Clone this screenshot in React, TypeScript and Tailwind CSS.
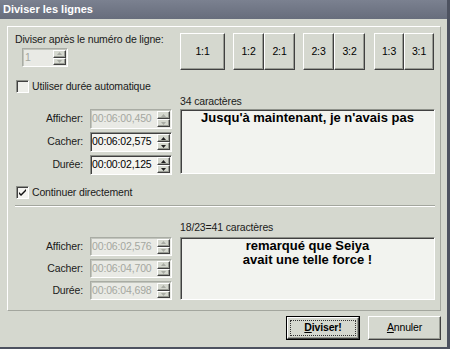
const raised =
  "border border-t-white border-l-white border-r-[#404040] border-b-[#404040] shadow-[inset_-1px_-1px_0_#9a9d95]";
const sunken =
  "border border-t-[#8e918a] border-l-[#8e918a] border-r-white border-b-white shadow-[inset_1px_1px_0_#404040]";
const sunkenOff =
  "border border-t-[#a9aca4] border-l-[#a9aca4] border-r-white border-b-white shadow-[inset_1px_1px_0_#c2c5bd]";
const small = "text-[10.5px] tracking-[-0.15px]";

const Arrow = ({ up, disabled }: { up: boolean; disabled?: boolean }) => (
  <svg width="5" height="3" viewBox="0 0 5 3">
    <path d={up ? "M2.5 0 L5 3 L0 3 Z" : "M0 0 L5 0 L2.5 3 Z"} fill={disabled ? "#a8aba3" : "#202020"} />
  </svg>
);

const Spinner = ({ disabled }: { disabled?: boolean }) => (
  <div className="flex flex-col w-[13px] h-full">
    <div className={`flex-1 flex items-center justify-center bg-[#d5d8cf] ${raised}`}>
      <Arrow up disabled={disabled} />
    </div>
    <div className={`flex-1 flex items-center justify-center bg-[#d5d8cf] ${raised}`}>
      <Arrow up={false} disabled={disabled} />
    </div>
  </div>
);

const TimeRow = ({ label, value, disabled, h }: { label: string; value: string; disabled?: boolean; h: string }) => (
  <div className={`flex items-center ${h}`}>
    <span className={`w-[68px] text-right ${small} text-[#1a1a1a]`}>{label}</span>
    <div
      className={`ml-[7px] w-[82px] h-full flex items-stretch ${disabled ? sunkenOff + " bg-[#e9eae5]" : sunken + " bg-[#f4f4f0]"}`}
    >
      <span className={`flex-1 pl-[1px] flex items-center ${small} ${disabled ? "text-[#a4a7a0]" : "text-black"}`}>
        {value}
      </span>
      <div className="py-[1px] pr-[1px]">
        <Spinner disabled={disabled} />
      </div>
    </div>
  </div>
);

const Check = ({ checked, label }: { checked?: boolean; label: string }) => (
  <div className="flex items-center h-[13px] ml-[1px]">
    <div className={`w-[13px] h-[13px] flex items-center justify-center ${checked ? "bg-[#f4f4f0]" : "bg-[#eeefea]"} ${sunken}`}>
      {checked && (
        <svg width="7" height="7" viewBox="0 0 7 7">
          <path d="M0 3 L0 5 L2 7 L7 2 L7 0 L2 5 Z" fill="#111" />
        </svg>
      )}
    </div>
    <span className={`ml-[3px] ${small} text-[#1a1a1a]`}>{label}</span>
  </div>
);

const RatioBtn = ({ t, w }: { t: string; w: string }) => (
  <div className={`${w} h-[37px] flex items-center justify-center ${small} text-black bg-[#d5d8cf] ${raised}`}>{t}</div>
);

export default function App() {
  return (
    <div className="w-[450px] h-[349px] overflow-hidden flex flex-col bg-[#d5d8cf] border-r-[3px] border-b-[2px] border-[#4d5260] font-['Liberation_Sans',Arial,sans-serif]">
      <div className="h-[19px] shrink-0 flex items-center pl-[3px] bg-gradient-to-b from-[#7b8190] to-[#676d7c] text-white font-bold text-[11px]">
        Diviser les lignes
      </div>
      <div className="flex flex-col pl-[7px] pt-[7px]">
        <div className="w-[434px] h-[285px] flex flex-col border border-t-white border-l-white border-r-[#a3a69e] border-b-[#a3a69e] pl-[7px] pr-[5px] pt-[6px]">
          <div className="flex">
            <div className="w-[165px] flex flex-col">
              <span className={`${small} text-[#1a1a1a] leading-[13px]`}>Diviser après le numéro de ligne:</span>
              <div className={`ml-[7px] mt-[2px] w-[46px] h-[19px] flex ${sunkenOff} bg-[#e9eae5]`}>
                <span className={`flex-1 pl-[2px] ${small} text-[#a4a7a0] flex items-center`}>1</span>
                <div className="py-[1px] pr-[1px]">
                  <Spinner disabled />
                </div>
              </div>
            </div>
            <div className="flex gap-[8px]">
              <RatioBtn t="1:1" w="w-[45px]" />
              <div className="flex">
                <RatioBtn t="1:2" w="w-[31px]" />
                <RatioBtn t="2:1" w="w-[31px]" />
              </div>
              <div className="flex">
                <RatioBtn t="2:3" w="w-[31px]" />
                <RatioBtn t="3:2" w="w-[31px]" />
              </div>
              <div className="flex ml-[1px]">
                <RatioBtn t="1:3" w="w-[30px]" />
                <RatioBtn t="3:1" w="w-[30px]" />
              </div>
            </div>
          </div>

          <div className="mt-[10px]">
            <Check label="Utiliser durée automatique" />
          </div>

          <div className="flex mt-[2px]">
            <div className="w-[165px] pt-[14px] flex flex-col gap-[3px]">
              <TimeRow label="Afficher:" value="00:06:00,450" disabled h="h-[20px]" />
              <TimeRow label="Cacher:" value="00:06:02,575" h="h-[20px]" />
              <TimeRow label="Durée:" value="00:00:02,125" h="h-[20px]" />
            </div>
            <div className="flex-1 flex flex-col">
              <span className={`h-[14px] ${small} leading-[13px] text-[#1a1a1a]`}>34 caractères</span>
              <div className={`h-[65px] ${sunken} bg-[#f2f3ef] pt-[1px] text-center font-bold text-[13px] leading-[14px] text-black`}>
                Jusqu'à maintenant, je n'avais pas
              </div>
            </div>
          </div>

          <div className="mt-[11px]">
            <Check checked label="Continuer directement" />
          </div>

          <div className="mt-[6px] h-[2px] border-t border-t-[#a3a69e] border-b border-b-white" />

          <div className="flex mt-[14px]">
            <div className="w-[165px] pt-[16px] flex flex-col gap-[3px]">
              <TimeRow label="Afficher:" value="00:06:02,576" disabled h="h-[19px]" />
              <TimeRow label="Cacher:" value="00:06:04,700" disabled h="h-[19px]" />
              <TimeRow label="Durée:" value="00:06:04,698" disabled h="h-[19px]" />
            </div>
            <div className="flex-1 flex flex-col">
              <span className={`h-[16px] ${small} leading-[13px] text-[#1a1a1a]`}>18/23=41 caractères</span>
              <div className={`h-[63px] ${sunken} bg-[#f2f3ef] pt-[1px] text-center font-bold text-[13px] leading-[14px] text-black`}>
                remarqué que Seiya
                <br />
                avait une telle force !
              </div>
            </div>
          </div>
        </div>

        <div className="w-[434px] flex justify-end gap-[8px] mt-[5px]">
          <div className="w-[74px] h-[24px] border border-black">
            <div className={`w-full h-full flex items-center justify-center bg-[#d5d8cf] ${raised} p-[2px]`}>
              <div className={`w-full h-full border border-dotted border-[#333] flex items-center justify-center ${small} font-bold text-black`}>
                <span>
                  <span className="underline">D</span>iviser!
                </span>
              </div>
            </div>
          </div>
          <div className={`w-[73px] h-[24px] flex items-center justify-center ${small} text-black bg-[#d5d8cf] ${raised}`}>
            <span>
              <span className="underline">A</span>nnuler
            </span>
          </div>
        </div>
      </div>
    </div>
  );
}
